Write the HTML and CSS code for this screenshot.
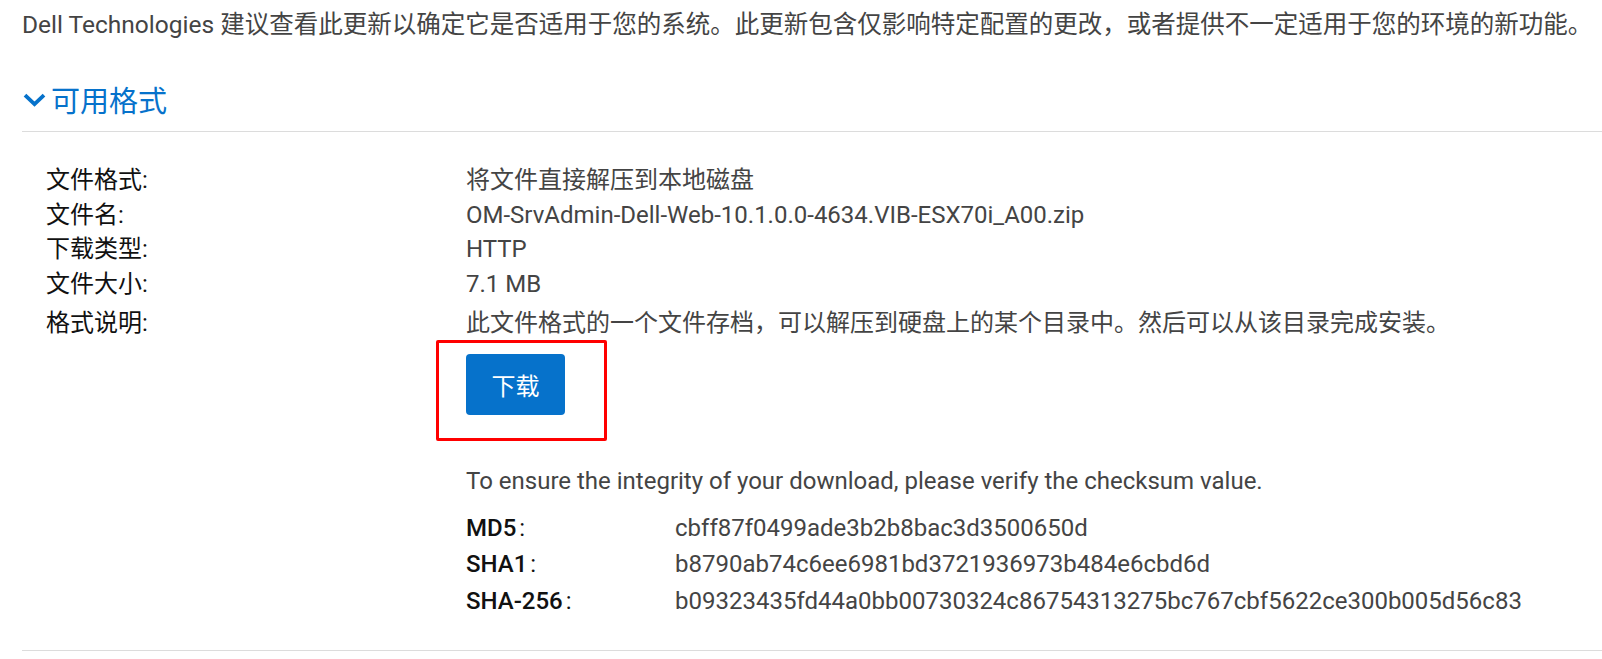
FILE: index.html
```html
<!DOCTYPE html>
<html lang="zh-CN">
<head>
<meta charset="utf-8">
<title>可用格式</title>
<link rel="stylesheet" href="styles.css">
</head>
<body>
<main class="page">
  <p class="intro">Dell Technologies 建议查看此更新以确定它是否适用于您的系统。此更新包含仅影响特定配置的更改，或者提供不一定适用于您的环境的新功能。</p>

  <section class="formats">
    <h2 class="formats-title">
      <svg class="chevron" viewBox="0 0 23 14" width="23" height="14" aria-hidden="true"><path d="M2 2.2 L11.5 11.2 L21 2.2" fill="none" stroke="#0672cb" stroke-width="3.8"/></svg>
      <span>可用格式</span>
    </h2>

    <div class="format-body">
      <dl class="details">
        <dt>文件格式:</dt><dd>将文件直接解压到本地磁盘</dd>
        <dt>文件名:</dt><dd>OM-SrvAdmin-Dell-Web-10.1.0.0-4634.VIB-ESX70i_A00.zip</dd>
        <dt>下载类型:</dt><dd>HTTP</dd>
        <dt>文件大小:</dt><dd>7.1 MB</dd>
        <dt class="desc">格式说明:</dt><dd class="desc">此文件格式的一个文件存档，可以解压到硬盘上的某个目录中。然后可以从该目录完成安装。</dd>
      </dl>

      <div class="value-col">
        <div class="btn-wrap">
          <button class="download">下载</button>
          <span class="highlight"></span>
        </div>

        <p class="checksum-note">To ensure the integrity of your download, please verify the checksum value.</p>
        <dl class="checksums">
          <dt><b>MD5</b>:</dt><dd>cbff87f0499ade3b2b8bac3d3500650d</dd>
          <dt><b>SHA1</b>:</dt><dd>b8790ab74c6ee6981bd3721936973b484e6cbd6d</dd>
          <dt><b>SHA-256</b>:</dt><dd>b09323435fd44a0bb00730324c86754313275bc767cbf5622ce300b005d56c83</dd>
        </dl>
      </div>
    </div>
  </section>
</main>
</body>
</html>
```

FILE: styles.css
```css
html, body {
  margin: 0;
  padding: 0;
  background: #fff;
}

body {
  font-family: Roboto, "Noto Sans CJK SC", sans-serif;
  color: #444;
}

.page {
  padding: 8px 0 0 22px;
}

.intro {
  margin: 0;
  font-size: 24.5px;
  line-height: 34px;
  color: #444;
  white-space: nowrap;
}

.formats-title {
  margin: 0;
  display: flex;
  align-items: center;
  gap: 5px;
  height: 90px;
  padding-top: 25px;
  box-sizing: border-box;
  font-size: 29px;
  font-weight: 400;
  color: #0672cb;
  border-bottom: 1px solid #dcdcdc;
}

.chevron {
  margin-left: 1px;
  margin-top: 2px;
  flex: none;
}

.format-body {
  padding: 31px 0 31px 24px;
  border-bottom: 1px solid #dcdcdc;
}

.details {
  display: grid;
  grid-template-columns: 420px 1fr;
  margin: 0;
  font-size: 24px;
  line-height: 34.5px;
}

.details dt {
  color: #111;
}

.details dd {
  margin: 0;
  color: #444;
}

.details .desc {
  margin-top: 5px;
}

.value-col {
  margin-left: 420px;
}

.btn-wrap {
  position: relative;
  display: inline-block;
  margin-top: 13px;
}

.download {
  display: block;
  width: 99px;
  height: 61px;
  border: 0;
  border-radius: 4px;
  background: #0672cb;
  color: #fff;
  font-family: Roboto, "Noto Sans CJK SC", sans-serif;
  font-size: 24px;
  padding: 0;
}

.highlight {
  position: absolute;
  left: -30px;
  top: -14px;
  width: 165px;
  height: 95px;
  border: 3px solid #f00;
  border-radius: 2px;
}

.checksum-note {
  margin: 49px 0 0;
  font-size: 24px;
  line-height: 34px;
  color: #444;
}

.checksums {
  display: grid;
  grid-template-columns: 209px 1fr;
  margin: 12px 0 0;
  font-size: 24px;
  line-height: 36.5px;
}

.checksums dt {
  color: #111;
}

.checksums dt b {
  font-weight: 500;
  margin-right: 3px;
}

.checksums dd {
  margin: 0;
  color: #444;
}
```
